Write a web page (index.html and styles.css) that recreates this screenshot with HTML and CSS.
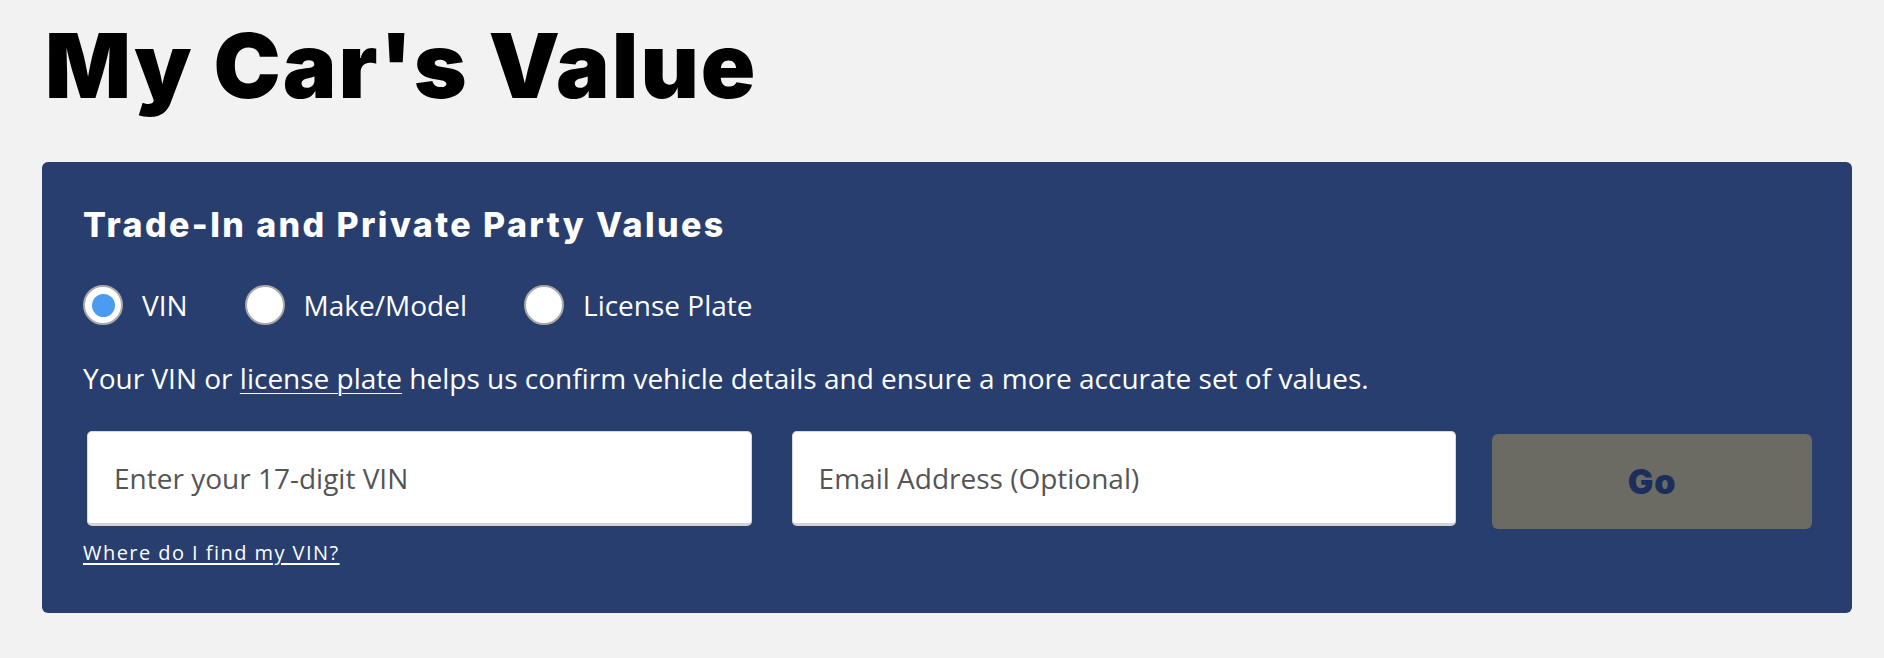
FILE: index.html
```html
<!DOCTYPE html>
<html lang="en">
<head>
<meta charset="utf-8">
<title>My Car's Value</title>
<link rel="stylesheet" href="styles.css">
</head>
<body>
<main class="page">
  <h1 class="page-title">My Car's Value</h1>
  <section class="panel">
    <h2 class="panel-title">Trade-In and Private Party Values</h2>
    <div class="radio-row">
      <label class="radio"><span class="radio-dot checked"></span><span class="radio-label">VIN</span></label>
      <label class="radio"><span class="radio-dot"></span><span class="radio-label">Make/Model</span></label>
      <label class="radio"><span class="radio-dot"></span><span class="radio-label">License Plate</span></label>
    </div>
    <p class="desc">Your VIN or <a href="#" class="desc-link">license plate</a> helps us confirm vehicle details and ensure a more accurate set of values.</p>
    <div class="form-row">
      <div class="field"><input class="input" type="text" placeholder="Enter your 17-digit VIN"></div>
      <div class="field"><input class="input" type="text" placeholder="Email Address (Optional)"></div>
      <button class="go-btn" type="button">Go</button>
    </div>
    <a href="#" class="help-link">Where do I find my VIN?</a>
  </section>
</main>
</body>
</html>
```
FILE: styles.css
```css
* { box-sizing: border-box; }
html, body { margin: 0; padding: 0; }
body {
  background: #f2f2f2;
  font-family: "Open Sans", "Noto Sans", sans-serif;
  width: 1884px;
  height: 658px;
  overflow: hidden;
}
.page {
  padding: 21px 32px 0 42px;
}
.page-title {
  margin: 0 0 51px 3px;
  font-family: Inter, "Liberation Sans", sans-serif;
  font-weight: 900;
  font-size: 90px;
  line-height: 90px;
  color: #000;
  letter-spacing: 2px;
}
.panel {
  width: 1810px;
  height: 451px;
  background: #273e6e;
  border-radius: 6px;
  padding: 43px 40px 0 41px;
  color: #fff;
}
.panel-title {
  margin: 0;
  font-family: Inter, "Liberation Sans", sans-serif;
  font-weight: 800;
  font-size: 34px;
  line-height: 40px;
  letter-spacing: 2.4px;
}
.radio-row {
  display: flex;
  align-items: center;
  height: 40px;
  margin-top: 40px;
}
.radio {
  display: flex;
  align-items: center;
  margin-right: 57px;
}
.radio:last-child { margin-right: 0; }
.radio-dot {
  width: 40px;
  height: 40px;
  border-radius: 50%;
  background: #fff;
  border: 2px solid #a9a9a9;
  display: flex;
  align-items: center;
  justify-content: center;
  margin-right: 19px;
}
.radio-dot.checked::after {
  content: "";
  width: 23px;
  height: 23px;
  border-radius: 50%;
  background: #4b9bf1;
}
.radio-label {
  font-size: 28px;
  line-height: 36px;
}
.desc {
  margin: 35px 0 0;
  font-size: 28px;
  line-height: 36px;
}
.desc-link {
  color: #fff;
  text-decoration: underline;
  text-underline-offset: 4px;
  text-decoration-thickness: 1px;
}
.form-row {
  display: flex;
  align-items: flex-start;
  margin-top: 35px;
  margin-left: 4px;
}
.field {
  width: 665px;
  margin-right: 40px;
}
.field + .field { margin-right: 36px; }
.input {
  width: 100%;
  height: 95px;
  border: 1px solid #d9d9d9;
  border-bottom: 3px solid #d4d4d4;
  border-radius: 5px;
  background: #fff;
  padding: 0 26px;
  font-family: "Open Sans", "Noto Sans", sans-serif;
  font-size: 28px;
  color: #333;
  outline: none;
}
.input::placeholder { color: #555; opacity: 1; }
.go-btn {
  width: 320px;
  height: 95px;
  margin-top: 3px;
  border: 0;
  border-radius: 6px;
  background: #6b6b63;
  color: #1c2f5c;
  font-family: Inter, "Liberation Sans", sans-serif;
  font-weight: 900;
  font-size: 34px;
  letter-spacing: 1px;
}
.help-link {
  display: inline-block;
  margin-top: 12px;
  font-size: 20px;
  line-height: 24px;
  letter-spacing: 1.45px;
  color: #fff;
  text-decoration: underline;
  text-underline-offset: 3px;
}
```
